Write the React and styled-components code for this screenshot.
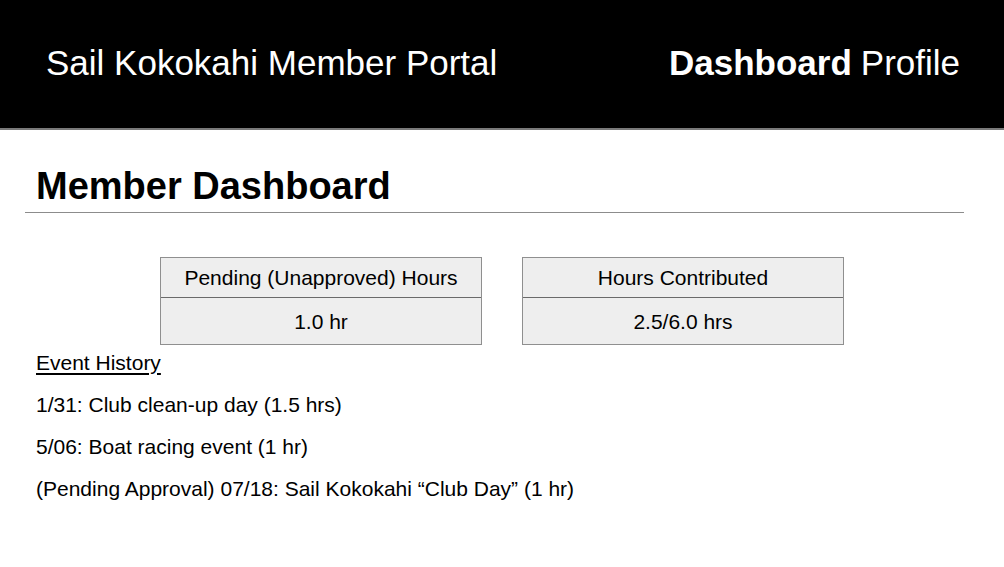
import React from "react";
import styled, { createGlobalStyle } from "styled-components";

const Global = createGlobalStyle`
  html, body { margin: 0; padding: 0; background: #fff; }
  body { font-family: "Liberation Sans", Arial, sans-serif; color: #000; }
  * { box-sizing: border-box; }
`;

const Header = styled.header`
  height: 130px;
  background: #000;
  border-bottom: 2px solid #7a7a7a;
  display: flex;
  align-items: center;
  justify-content: space-between;
  padding: 0 44px 2px 46px;
  color: #fff;
  font-size: 35px;
`;

const Title = styled.div`
  line-height: 40px;
`;

const Nav = styled.nav`
  display: flex;
  gap: 9px;
  line-height: 40px;
`;

const NavLink = styled.span`
  font-weight: ${(p) => (p.$active ? 700 : 400)};
`;

const Main = styled.main`
  padding: 34px 40px 0 25px;
`;

const Heading = styled.h1`
  margin: 0;
  padding-left: 11px;
  font-size: 38px;
  line-height: 44px;
  font-weight: 700;
`;

const Rule = styled.hr`
  margin: 4px 0 0;
  border: 0;
  border-top: 1px solid #8c8c8c;
  height: 0;
`;

const Cards = styled.div`
  display: flex;
  justify-content: center;
  gap: 40px;
  margin-top: 44px;
  margin-left: -25px;
  margin-right: -40px;
`;

const Card = styled.div`
  width: 322px;
  background: #eeeeee;
  border: 1px solid #8f8f8f;
  font-size: 21px;
  display: flex;
  flex-direction: column;
`;

const CardHead = styled.div`
  height: 40px;
  display: flex;
  align-items: center;
  justify-content: center;
  border-bottom: 1px solid #6a6a6a;
  padding-top: 1px;
`;

const CardValue = styled.div`
  height: 46px;
  display: flex;
  align-items: center;
  justify-content: center;
  padding-top: 2px;
`;

const History = styled.section`
  margin-top: 6px;
  padding-left: 11px;
  display: flex;
  flex-direction: column;
  gap: 18px;
  font-size: 21px;
`;

const HistoryTitle = styled.div`
  line-height: 24px;
  text-decoration: underline;
  text-underline-offset: 3px;
`;

const Item = styled.div`
  line-height: 24px;
`;

const cards = [
  { label: "Pending (Unapproved) Hours", value: "1.0 hr" },
  { label: "Hours Contributed", value: "2.5/6.0 hrs" },
];

const events = [
  "1/31: Club clean-up day (1.5 hrs)",
  "5/06: Boat racing event (1 hr)",
  "(Pending Approval) 07/18: Sail Kokokahi \u201cClub Day\u201d (1 hr)",
];

export default function App() {
  return (
    <>
      <Global />
      <Header>
        <Title>Sail Kokokahi Member Portal</Title>
        <Nav>
          <NavLink $active>Dashboard</NavLink>
          <NavLink>Profile</NavLink>
        </Nav>
      </Header>
      <Main>
        <Heading>Member Dashboard</Heading>
        <Rule />
        <Cards>
          {cards.map((c) => (
            <Card key={c.label}>
              <CardHead>{c.label}</CardHead>
              <CardValue>{c.value}</CardValue>
            </Card>
          ))}
        </Cards>
        <History>
          <HistoryTitle>Event History</HistoryTitle>
          {events.map((e) => (
            <Item key={e}>{e}</Item>
          ))}
        </History>
      </Main>
    </>
  );
}
